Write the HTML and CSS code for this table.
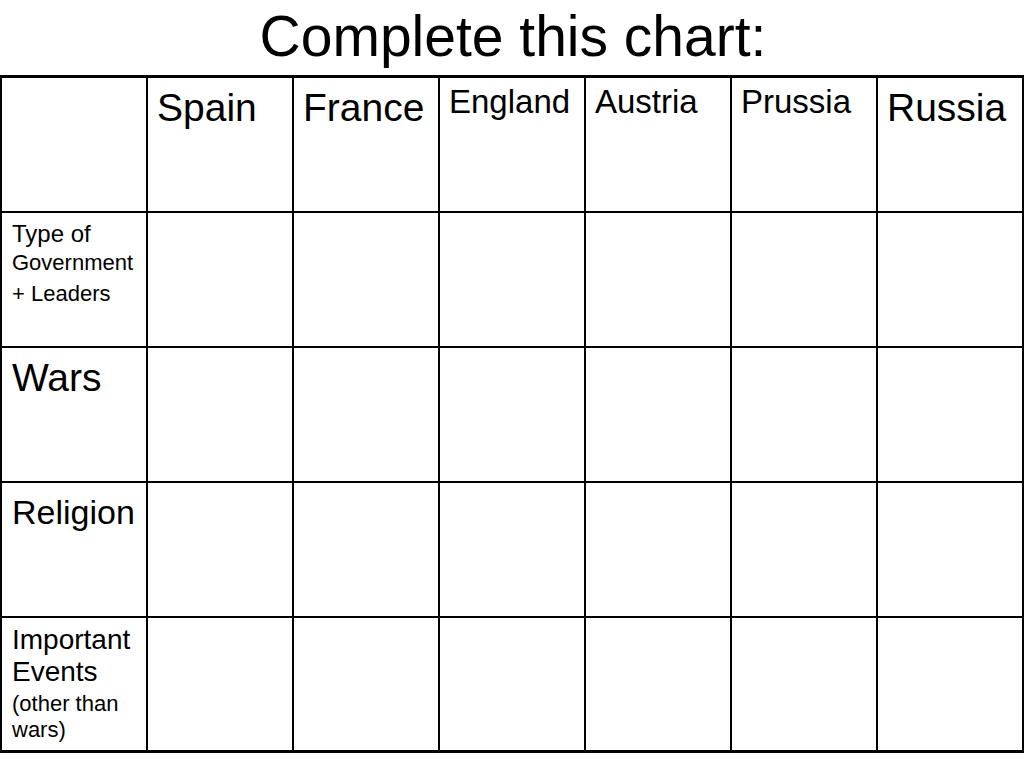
FILE: index.html
```html
<!DOCTYPE html>
<html>
<head>
<meta charset="utf-8">
<link rel="stylesheet" href="styles.css">
</head>
<body>
<h1 class="title">Complete this chart:</h1>
<div class="chart">
  <div class="cell"></div>
  <div class="cell head big">Spain</div>
  <div class="cell head big">France</div>
  <div class="cell head mid">England</div>
  <div class="cell head mid">Austria</div>
  <div class="cell head mid">Prussia</div>
  <div class="cell head big">Russia</div>

  <div class="cell label gov"><span class="l1">Type of</span><span class="l2">Government</span><span class="l3">+ Leaders</span></div>
  <div class="cell"></div><div class="cell"></div><div class="cell"></div><div class="cell"></div><div class="cell"></div><div class="cell"></div>

  <div class="cell label wars">Wars</div>
  <div class="cell"></div><div class="cell"></div><div class="cell"></div><div class="cell"></div><div class="cell"></div><div class="cell"></div>

  <div class="cell label religion">Religion</div>
  <div class="cell"></div><div class="cell"></div><div class="cell"></div><div class="cell"></div><div class="cell"></div><div class="cell"></div>

  <div class="cell label events"><span class="e1">Important</span><span class="e1">Events</span><span class="e2 first">(other than</span><span class="e2">wars)</span></div>
  <div class="cell"></div><div class="cell"></div><div class="cell"></div><div class="cell"></div><div class="cell"></div><div class="cell"></div>
</div>
</body>
</html>
```
FILE: styles.css
```css
html, body {
  margin: 0;
  padding: 0;
  background: #fff;
}
body {
  width: 1024px;
  height: 768px;
  font-family: "Liberation Sans", Arial, sans-serif;
  color: #000;
  overflow: hidden;
}
.title {
  margin: 0;
  height: 75px;
  box-sizing: border-box;
  padding-top: 3px;
  font-size: 57px;
  line-height: 66px;
  font-weight: normal;
  text-align: center;
  padding-left: 2px;
  white-space: nowrap;
}
.chart {
  display: grid;
  grid-template-columns: repeat(7, 1fr);
  grid-template-rows: 133px 133px 133px 133px 132px;
  gap: 2px;
  background: #000;
  border-top: 3px solid #000;
  border-bottom: 3px solid #000;
  border-left: 2px solid #000;
  border-right: 2px solid #000;
  width: 1024px;
  box-sizing: border-box;
}
.cell {
  background: #fff;
  padding: 0 2px 0 9px;
  overflow: hidden;
  white-space: nowrap;
}
.head.big {
  font-size: 39px;
  line-height: 45px;
  padding-top: 7px;
}
.head.mid {
  font-size: 33px;
  line-height: 38px;
  padding-top: 5px;
}
.label {
  padding-left: 10px;
}
.gov {
  padding-top: 7px;
}
.gov span {
  display: block;
}
.gov .l1 {
  font-size: 24px;
  line-height: 28px;
}
.gov .l2 {
  font-size: 22px;
  line-height: 29px;
}
.gov .l3 {
  font-size: 22px;
  line-height: 33px;
}
.wars {
  font-size: 39px;
  line-height: 45px;
  padding-top: 7px;
}
.religion {
  font-size: 34px;
  line-height: 39px;
  padding-top: 10px;
}
.events {
  padding-top: 6px;
}
.events span {
  display: block;
}
.events .e1 {
  font-size: 28px;
  line-height: 32px;
}
.events .e2 {
  font-size: 22px;
  line-height: 26px;
}
.events .e2.first {
  margin-top: 3px;
}
```
